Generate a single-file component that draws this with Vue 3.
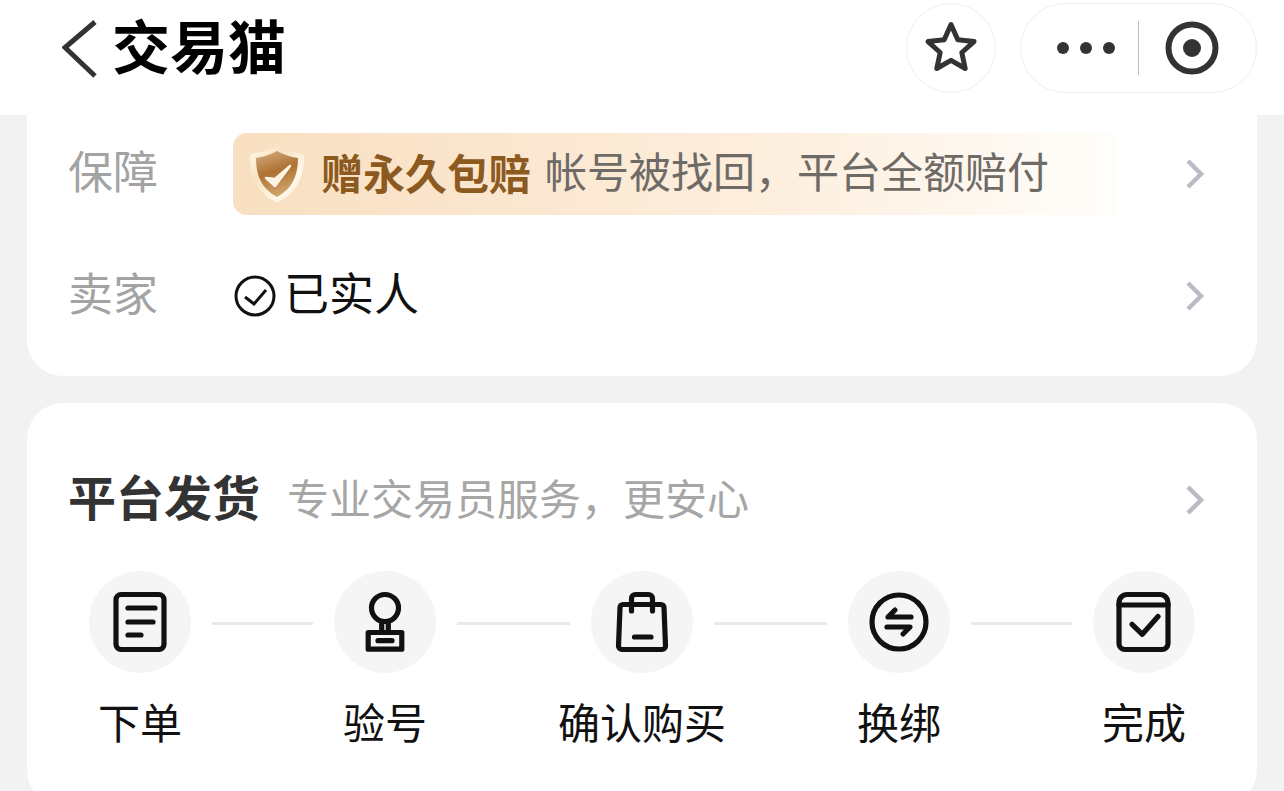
<template>
  <div class="page">
    <!-- 顶部导航 -->
    <header class="nav">
      <svg class="nav__back" width="36" height="58" viewBox="0 0 36 58" fill="none">
        <path d="M33 2 3 27.500 33 56" stroke="#333" stroke-width="5" />
      </svg>
      <h1 class="nav__title">交易猫</h1>
      <div class="nav__star">
        <svg width="56" height="56" viewBox="0 0 56 56" fill="none">
          <path d="M28 4.500 34.800 19.800 51 21.600 38.800 32.500 42.200 48.500 28 40.300 13.800 48.500 17.200 32.500 5 21.600 21.200 19.800Z" stroke="#333" stroke-width="5" stroke-linejoin="round" />
        </svg>
      </div>
      <div class="nav__capsule">
        <span class="nav__dots"><i></i><i></i><i></i></span>
        <span class="nav__divider"></span>
        <svg width="56" height="56" viewBox="0 0 56 56" fill="none">
          <circle cx="28" cy="28" r="23.500" stroke="#333" stroke-width="6" />
          <circle cx="28" cy="28" r="9" fill="#333" />
        </svg>
      </div>
    </header>

    <section class="card card--info">
      <div class="row">
        <span class="row__label">保障</span>
        <div class="badge">
          <svg class="badge__shield" width="56" height="62" viewBox="0 0 56 62">
            <defs>
              <linearGradient id="rim" x1="0" y1="0" x2="1" y2="1">
                <stop offset="0" stop-color="#fffaf0" />
                <stop offset="0.35" stop-color="#f8e2c0" />
                <stop offset="0.7" stop-color="#fff8ec" />
                <stop offset="1" stop-color="#fdeed6" />
              </linearGradient>
              <linearGradient id="core" x1="0.3" y1="0" x2="0.6" y2="1">
                <stop offset="0" stop-color="#cfa678" />
                <stop offset="0.45" stop-color="#ad7231" />
                <stop offset="1" stop-color="#d6ab75" />
              </linearGradient>
            </defs>
            <path d="M28 2.500C33 6 44 9.500 52 10.500Q55 11 55 14C55 34 48 50 28 59.500C8 50 1 34 1 14Q1 11 4 10.500C12 9.500 23 6 28 2.500Z" fill="url(#rim)" />
            <path d="M28 8C33 11 42 14 49 15C49 33 43 46 28 54C13 46 7 33 7 15C14 14 23 11 28 8Z" fill="url(#core)" />
            <path d="M17 35 26 43 41 23 26 36Z" fill="#fdf3e2" stroke="#fdf3e2" stroke-width="2.500" stroke-linejoin="round" />
          </svg>
          <span class="badge__title">赠永久包赔</span>
          <span class="badge__desc">帐号被找回，平台全额赔付</span>
        </div>
        <svg class="chevron" width="20" height="32" viewBox="0 0 20 32" fill="none">
          <path d="M3 3 16 16 3 29" stroke="#b9bcc4" stroke-width="4.500" />
        </svg>
      </div>
      <div class="row">
        <span class="row__label">卖家</span>
        <div class="seller">
          <svg width="42" height="42" viewBox="0 0 42 42" fill="none">
            <circle cx="21" cy="21" r="19" stroke="#111" stroke-width="3" />
            <path d="M11 22 20 29 32 15" stroke="#111" stroke-width="3" />
          </svg>
          <span class="seller__text">已实人</span>
        </div>
        <svg class="chevron" width="20" height="32" viewBox="0 0 20 32" fill="none">
          <path d="M3 3 16 16 3 29" stroke="#b9bcc4" stroke-width="4.500" />
        </svg>
      </div>
    </section>

    <section class="card card--ship">
      <div class="ship-head">
        <span class="ship-head__title">平台发货</span>
        <span class="ship-head__sub">专业交易员服务，更安心</span>
        <svg class="chevron" width="20" height="32" viewBox="0 0 20 32" fill="none">
          <path d="M3 3 16 16 3 29" stroke="#b9bcc4" stroke-width="4.500" />
        </svg>
      </div>
      <div class="steps">
        <template v-for="(step, i) in steps" :key="step.name">
          <span v-if="i" class="steps__line" :class="{ 'steps__line--wide': i === 2 || i === 3 }"></span>
          <div class="step">
            <div class="step__icon">
              <svg width="64" height="64" viewBox="0 0 64 64" fill="none" stroke="#111" stroke-width="5.200" stroke-linecap="round" stroke-linejoin="round">
                <path v-for="d in step.paths" :key="d" :d="d" />
              </svg>
            </div>
            <span class="step__name">{{ step.name }}</span>
          </div>
        </template>
      </div>
    </section>
  </div>
</template>

<script setup>
const steps = [
  {
    name: '下单',
    paths: [
      'M13 4.500H51A5 5 0 0 1 56 9.500V54.500A5 5 0 0 1 51 59.500H13A5 5 0 0 1 8 54.500V9.500A5 5 0 0 1 13 4.500Z',
      'M20 18H47',
      'M20 32H45',
      'M20 45H33'
    ]
  },
  {
    name: '验号',
    paths: [
      'M32 4.500A13.500 13.500 0 1 1 32 31.500A13.500 13.500 0 1 1 32 4.500Z',
      'M28.700 32V42',
      'M35.300 32V42',
      'M15.200 42.500H48.800V59.200H15.200Z',
      'M25 50.700H39'
    ]
  },
  {
    name: '确认购买',
    paths: [
      'M13 14.500H51A3 3 0 0 1 54 17.500L55.500 56A3.500 3.500 0 0 1 52 59.500H12A3.500 3.500 0 0 1 8.500 56L10 17.500A3 3 0 0 1 13 14.500Z',
      'M21.500 21V8.500A4 4 0 0 1 25.500 4.500H38.500A4 4 0 0 1 42.500 8.500V21',
      'M24.500 47H41'
    ]
  },
  {
    name: '换绑',
    paths: [
      'M32 5A27 27 0 1 1 32 59A27 27 0 1 1 32 5Z',
      'M44 27H21L28 20',
      'M20 37H43L36 44'
    ]
  },
  {
    name: '完成',
    paths: [
      'M15 4.500H48A8 8 0 0 1 56 12.500V53.500A6 6 0 0 1 50 59.500H13A6 6 0 0 1 7 53.500V12.500A8 8 0 0 1 15 4.500Z',
      'M7 15H56',
      'M20 34.300 30.300 44.300 46 26.500'
    ]
  }
]
</script>

<style>
html, body {
  height: 791px;
  overflow: hidden;
  background: #f2f2f2;
}
</style>

<style scoped>
.page {
  font-family: "Noto Sans CJK SC", "Noto Sans", sans-serif;
  color: #111;
}
.nav {
  height: 115px;
  background: #fff;
  display: flex;
  align-items: center;
  padding: 0 27px 19px 62px;
  box-sizing: border-box;
}
.nav__back {
  margin-top: 2px;
}
.nav__title {
  margin: 0 0 8px 14px;
  font-size: 58px;
  line-height: 70px;
  font-weight: 700;
  color: #000;
}
.nav__star {
  margin-left: auto;
  width: 90px;
  height: 90px;
  box-sizing: border-box;
  border: 1px solid #eee;
  border-radius: 50%;
  display: flex;
  align-items: center;
  justify-content: center;
}
.nav__capsule {
  margin-left: 24px;
  width: 237px;
  height: 90px;
  box-sizing: border-box;
  border: 1px solid #eee;
  border-radius: 45px;
  display: flex;
  align-items: center;
  padding-left: 36px;
}
.nav__dots {
  display: flex;
  gap: 11px;
}
.nav__dots i {
  width: 12px;
  height: 12px;
  border-radius: 50%;
  background: #333;
}
.nav__divider {
  width: 1px;
  height: 54px;
  background: #bdbdbd;
  margin: 0 25px 0 23px;
}
.card {
  margin: 0 27px;
  background: #fff;
  border-radius: 36px;
}
.card--info {
  border-radius: 0 0 36px 36px;
  padding: 18px 52px 39px 41px;
  display: flex;
  flex-direction: column;
  gap: 40px;
}
.row {
  height: 82px;
  display: flex;
  align-items: center;
}
.row__label {
  width: 165px;
  flex: none;
  margin-bottom: 10px;
  font-size: 45px;
  color: #a3a3a3;
}
.chevron {
  margin-left: auto;
  flex: none;
}
.badge {
  width: 882px;
  height: 82px;
  box-sizing: border-box;
  padding-left: 16px;
  display: flex;
  align-items: center;
  border-radius: 14px 0 0 14px;
  background: linear-gradient(90deg, #f8dfc0 0%, #fdeedd 60%, #fffdfa 100%);
}
.badge__shield {
  flex: none;
}
.badge__title {
  margin: 0 0 5px 16px;
  font-size: 42px;
  font-weight: 700;
  color: #8c5a1f;
  white-space: nowrap;
}
.badge__desc {
  margin: 0 0 10px 14px;
  font-size: 42px;
  color: #6e6a66;
  white-space: nowrap;
}
.seller {
  display: flex;
  align-items: center;
  gap: 8px;
  font-size: 45px;
  color: #111;
}
.seller svg {
  margin-left: 1px;
}
.seller__text {
  margin-bottom: 10px;
}
.card--ship {
  margin-top: 27px;
  height: 403px;
  box-sizing: border-box;
  padding: 67px 52px 0 41px;
}
.ship-head {
  height: 60px;
  display: flex;
  align-items: center;
}
.ship-head__title {
  margin-bottom: 10px;
  font-size: 48px;
  font-weight: 700;
  color: #333;
  white-space: nowrap;
}
.ship-head__sub {
  margin: 0 0 8px 27px;
  font-size: 42px;
  color: #a6a6a6;
  white-space: nowrap;
}
.steps {
  margin: 41px 10px 0 21px;
  display: flex;
  align-items: flex-start;
}
.steps__line {
  flex: none;
  width: 101px;
  height: 3px;
  margin: 51px 21px 0;
  background: #e9e9e9;
}
.steps__line--wide {
  width: 113px;
}
.step {
  flex: none;
  width: 102px;
  display: flex;
  flex-direction: column;
  align-items: center;
}
.step__icon {
  width: 102px;
  height: 102px;
  border-radius: 50%;
  background: #f5f5f5;
  display: flex;
  align-items: center;
  justify-content: center;
}
.step__name {
  margin-top: 20px;
  font-size: 42px;
  line-height: 56px;
  white-space: nowrap;
  color: #111;
}
</style>
